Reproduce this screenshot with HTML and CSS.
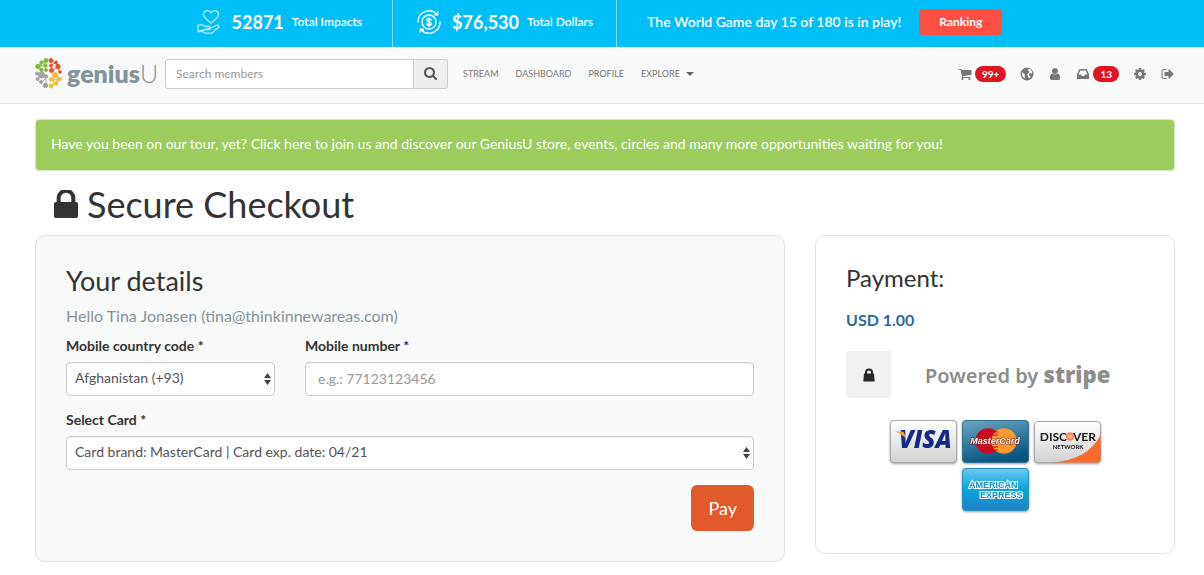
FILE: index.html
```html
<!DOCTYPE html>
<html lang="en">
<head>
<meta charset="utf-8">
<title>Secure Checkout - GeniusU</title>
<link rel="stylesheet" href="styles.css">
</head>
<body>
<div class="impact-bar">
  <div class="stat">
    <svg class="stat-icon" viewBox="0 0 24 26" fill="none" stroke="#b5ecff" stroke-width="1.3" stroke-linejoin="round" stroke-linecap="round"><path d="M14 14C10 11 6.500 8.500 6.500 5.500c0-4.500 6-5 7.500-1.500 1.500-3.500 7.500-3 7.500 1.500 0 3-3.500 5.500-7.500 8.500z"/><path d="M1 17c3-2 5-1.500 7 .5h4c2 0 2 3 0 3H8m5-1 6-3c2.500-1 4 .5 2 2.200L15 24l-6 .3-4-1.800H1zM1 16v7"/></svg>
    <strong class="stat-value">52871</strong><span class="stat-label">Total Impacts</span>
  </div>
  <div class="stat">
    <svg class="stat-icon" viewBox="0 0 24 26" fill="none" stroke="#fff" stroke-width="1.4" stroke-linecap="round"><circle cx="12" cy="13" r="7"/><path d="M1 13A11 11 0 0 1 20 5.300M23 13A11 11 0 0 1 4 20.700M17.500 5.500l3 .5.300-3M6.500 20.500l-3-.5-.3 3"/><path d="M14.300 11c-.4-1.600-4.400-1.700-4.400.2 0 2 4.400 1.300 4.400 3.500 0 2-4.200 2-4.600.1M12 8.500v9"/></svg>
    <strong class="stat-value">$76,530</strong><span class="stat-label">Total Dollars</span>
  </div>
  <div class="game"><span>The World Game day 15 of 180 is in play!</span><button class="ranking" type="button">Ranking</button></div>
</div>
<header class="navbar">
  <a class="brand" href="#" aria-label="geniusU">
    <svg class="brand-mark" viewBox="0 0 27 31">
      <g fill="#83b941" stroke="#83b941"><path d="M3.500 9 7 5l4-3M4 8l6-.5V3M10.500 12V7M6.500 11.500 3 8.500" fill="none"/><circle cx="3" cy="8.500" r="2.300"/><circle cx="6.500" cy="4.500" r="1.700"/><circle cx="11" cy="2.500" r="2"/><circle cx="10.500" cy="7.500" r="1.700"/><circle cx="6.500" cy="12" r="1.700"/><circle cx="11" cy="12" r="1.500"/></g>
      <g fill="#e2542b" stroke="#e2542b"><path d="m16 2 4 3 4 4M20 5l-4 3 1 5 5-4 3 5" fill="none"/><circle cx="16" cy="2.500" r="2"/><circle cx="21" cy="4.500" r="1.500"/><circle cx="16" cy="7.500" r="1.500"/><circle cx="23" cy="8.500" r="2.200"/><circle cx="16.500" cy="12.500" r="2"/><circle cx="25" cy="14" r="1.300"/></g>
      <g fill="#a3a3a3" stroke="#a3a3a3"><path d="m2 15 5 1 4 4v7M7 16l-5 5 4 4 5-5" fill="none"/><circle cx="2" cy="15.500" r="1.500"/><circle cx="6.500" cy="17" r="3"/><circle cx="2.500" cy="21" r="1.500"/><circle cx="11" cy="18.500" r="1.700"/><circle cx="6" cy="24" r="1.500"/><circle cx="10.500" cy="27.500" r="2.200"/></g>
      <g fill="#f2be3e" stroke="#f2be3e"><path d="m20 15 4 6-4 5-4 2m4-12-3 6 7-1m-7 1 3 4" fill="none" stroke-width="1.500"/><circle cx="20" cy="17" r="2.600"/><circle cx="16" cy="21.500" r="1.800"/><circle cx="24.500" cy="21" r="1.800"/><circle cx="21" cy="25.500" r="1.800"/><circle cx="16" cy="28" r="2"/></g>
    </svg>
    <span class="brand-name">genius<span class="brand-u">U</span></span>
  </a>
  <form class="search">
    <input class="search-input" type="text" placeholder="Search members" aria-label="Search members">
    <button class="search-button" type="button" aria-label="Search"><svg class="icon" viewBox="0 0 1792 1792"><path d="M1152 704q0-185-131.500-316.500t-316.500-131.500-316.500 131.500-131.500 316.500 131.500 316.500 316.500 131.500 316.500-131.500 131.500-316.500zm512 832q0 52-38 90t-90 38q-54 0-90-38l-343-342q-179 124-399 124-143 0-273.500-55.500t-225-150-150-225-55.500-273.500 55.500-273.500 150-225 225-150 273.500-55.500 273.500 55.500 225 150 150 225 55.500 273.500q0 220-124 399l343 343q37 37 37 90z"/></svg></button>
  </form>
  <nav class="menu"><a href="#">STREAM</a><a href="#">DASHBOARD</a><a href="#">PROFILE</a><a href="#">EXPLORE<span class="caret"></span></a></nav>
  <div class="tools">
    <a href="#" aria-label="Cart"><svg class="icon" viewBox="0 0 1792 1792"><path d="M704 1536q0 52-38 90t-90 38-90-38-38-90 38-90 90-38 90 38 38 90zm896 0q0 52-38 90t-90 38-90-38-38-90 38-90 90-38 90 38 38 90zm128-1088v512q0 24-16.500 42.500t-40.500 21.500l-1044 122q13 60 13 70 0 16-24 64h920q26 0 45 19t19 45-19 45-45 19h-1024q-26 0-45-19t-19-45q0-11 8-31.500t16-36 21.500-40 15.500-29.500l-177-823h-204q-26 0-45-19t-19-45 19-45 45-19h256q16 0 28.500 6.500t19.500 15.500 13 24.500 8 26 5.500 29.500 4.500 26h1201q26 0 45 19t19 45z"/></svg><span class="badge">99+</span></a>
    <a href="#" aria-label="World"><svg class="icon" viewBox="0 0 14 14"><circle cx="7" cy="7" r="6.500"/><path fill="#f8faf9" d="m8 2.300 1.500-.5 1.800 1.500 1 1.900-.8 1.500-1.200-.6-1.300 1 .2 1.500 1.200.6-.5 1.700-1.200.3-.6-1.900-1-1.200.6-1.400 1.200-1.300.4-.8-.9-.9zM2 5l1.500 1.700 1.500.8-.4 1.400.4 2.400-1.700-.8L1.900 8z"/></svg></a>
    <a href="#" aria-label="Profile"><svg class="icon" viewBox="0 0 1792 1792"><path d="M1536 1399q0 109-62.500 187t-150.500 78h-854q-88 0-150.500-78t-62.500-187q0-85 8.500-160.500t31.500-152 58.500-131 94-89 134.500-34.500q131 128 313 128t313-128q76 0 134.500 34.500t94 89 58.500 131 31.500 152 8.500 160.500zm-256-887q0 159-112.500 271.500t-271.500 112.500-271.500-112.500-112.500-271.500 112.500-271.500 271.500-112.500 271.500 112.500 112.500 271.500z"/></svg></a>
    <a href="#" aria-label="Inbox"><svg class="icon" viewBox="0 0 1792 1792"><path d="M1151 960h316q-1-3-2.500-8t-2.500-8l-212-496h-708l-212 496q-1 2-2.500 8t-2.500 8h316l95 192h320zm513 30v482q0 26-19 45t-45 19h-1408q-26 0-45-19t-19-45v-482q0-62 25-123l238-552q10-25 36.500-42t52.500-17h832q26 0 52.500 17t36.500 42l238 552q25 61 25 123z"/></svg><span class="badge">13</span></a>
    <a href="#" aria-label="Settings"><svg class="icon" viewBox="0 0 1792 1792"><path d="M1152 896q0-106-75-181t-181-75-181 75-75 181 75 181 181 75 181-75 75-181zm512-109v222q0 12-8 23t-20 13l-185 28q-19 54-39 91 35 50 107 138 10 12 10 25t-9 23q-27 37-99 108t-94 71q-12 0-26-9l-138-108q-44 23-91 38-16 136-29 186-7 28-36 28h-222q-14 0-24.500-8.500t-11.500-21.500l-28-184q-49-16-90-37l-141 107q-10 9-25 9-14 0-25-11-126-114-165-168-7-10-7-23 0-12 8-23 15-21 51-66.500t54-70.500q-27-50-41-99l-183-27q-13-2-21-12.500t-8-23.500v-222q0-12 8-23t19-13l186-28q14-46 39-92-40-57-107-138-10-12-10-24 0-10 9-23 26-36 98.500-107.500t94.500-71.500q13 0 26 10l138 107q44-23 91-38 16-136 29-186 7-28 36-28h222q14 0 24.500 8.500t11.500 21.500l28 184q49 16 90 37l142-107q9-9 24-9 13 0 25 10 129 119 165 170 7 8 7 22 0 12-8 23-15 21-51 66.500t-54 70.500q26 50 41 98l183 28q13 2 21 12.500t8 23.500z"/></svg></a>
    <a href="#" aria-label="Sign out"><svg class="icon" viewBox="0 0 1792 1792"><path d="M704 1440q0 4 1 20t.5 26.500-3 23.500-10 19.500-20.500 6.500h-320q-119 0-203.500-84.500t-84.500-203.500v-704q0-119 84.500-203.500t203.500-84.500h320q13 0 22.500 9.500t9.500 22.500q0 4 1 20t.5 26.500-3 23.500-10 19.500-20.500 6.500h-320q-66 0-113 47t-47 113v704q0 66 47 113t113 47h312l11.500 1 11.500 3 8 5.500 7 9 2 13.500zm928-544q0 26-19 45l-544 544q-19 19-45 19t-45-19-19-45v-288h-448q-26 0-45-19t-19-45v-384q0-26 19-45t45-19h448v-288q0-26 19-45t45-19 45 19l544 544q19 19 19 45z"/></svg></a>
  </div>
</header>
<main class="page">
  <a class="alert" href="#">Have you been on our tour, yet? Click here to join us and discover our GeniusU store, events, circles and many more opportunities waiting for you!</a>
  <h1 class="title"><svg class="title-lock" viewBox="320 192 1152 1344"><path d="M640 768h512v-192q0-106-75-181t-181-75-181 75-75 181v192zm832 96v576q0 40-28 68t-68 28h-960q-40 0-68-28t-28-68v-576q0-40 28-68t68-28h32v-192q0-184 132-316t316-132 316 132 132 316v192h32q40 0 68 28t28 68z"/></svg>Secure Checkout</h1>
  <div class="columns">
    <form class="panel details">
      <h2 class="details-title">Your details</h2>
      <p class="hello">Hello Tina Jonasen (tina@thinkinnewareas.com)</p>
      <div class="phone-row">
        <div class="field">
          <label for="country">Mobile country code *</label>
          <div class="select-wrap"><select class="control" id="country"><option>Afghanistan (+93)</option></select><svg class="arrows" viewBox="0 0 7 12"><path d="M0 5 3.500 0 7 5zM0 7h7l-3.500 5z"/></svg></div>
        </div>
        <div class="field">
          <label for="mobile">Mobile number *</label>
          <input class="control" id="mobile" type="tel" placeholder="e.g.: 77123123456">
        </div>
      </div>
      <div class="field">
        <label for="card">Select Card *</label>
        <div class="select-wrap"><select class="control" id="card"><option>Card brand: MasterCard | Card exp. date: 04/21</option></select><svg class="arrows" viewBox="0 0 7 12"><path d="M0 5 3.500 0 7 5zM0 7h7l-3.500 5z"/></svg></div>
      </div>
      <button class="pay" type="button">Pay</button>
    </form>
    <aside class="panel payment">
      <h2 class="payment-title">Payment:</h2>
      <p class="amount">USD 1.00</p>
      <div class="stripe-row">
        <span class="lock-tile"><svg class="small-lock" viewBox="0 0 12 14"><path d="M1 5.500h10l.7 8H.3zM2 6V4.500a4 4 0 0 1 8 0V6H8V4.500a2 2 0 0 0-4 0V6z" fill="#29272c"/></svg></span>
        <span class="powered">Powered by <strong>stripe</strong></span>
      </div>
      <div class="cards">
        <svg class="card" viewBox="0 0 67 43" role="img" aria-label="Visa"><defs><linearGradient id="silver" x2="0" y2="1"><stop stop-color="#fff"/><stop offset="1" stop-color="#d2d2d4"/></linearGradient></defs><rect x=".5" y=".5" width="66" height="42" rx="3.500" fill="url(#silver)" stroke="#aaa"/><text class="visa" x="9" y="28">VISA</text><path d="M5 11.500h7q2 0 2.500 2l1.500 5.500Q12 13.500 5 11.500z" fill="#f4a23c"/></svg>
        <svg class="card" viewBox="0 0 67 43" role="img" aria-label="MasterCard"><defs><linearGradient id="navy" x2=".3" y2="1"><stop stop-color="#6aa6c2"/><stop offset="1" stop-color="#075680"/></linearGradient></defs><rect x=".5" y=".5" width="66" height="42" rx="3.500" fill="url(#navy)" stroke="#37718f"/><circle cx="26" cy="21" r="12.700" fill="#cc0920"/><circle cx="42" cy="21" r="12.700" fill="#fc9a31"/><path d="M31 12h5M30 15h6M30 27h6M31 30h5" stroke="#cc0920"/><text class="mastercard" x="33" y="24">MasterCard</text></svg>
        <svg class="card" viewBox="0 0 67 43" role="img" aria-label="Discover"><rect x=".5" y="1.500" width="66" height="41" rx="3.500" fill="url(#silver)" stroke="#aaa"/><path d="M18 42.500Q54 40 66.500 15v24q0 3.500-3.500 3.500z" fill="#fa6a2b"/><text class="discover" x="33" y="21" text-anchor="end">DISC</text><text class="discover" x="39" y="21">VER</text><circle cx="36" cy="16.500" r="4.200" fill="#f78b55"/><circle cx="36" cy="16.500" r="2" fill="#fbb48d"/><text class="network" x="34" y="29">NETWORK</text></svg>
        <svg class="card" viewBox="0 0 67 43" role="img" aria-label="American Express"><defs><linearGradient id="sky" x2="0" y2="1"><stop stop-color="#6dc9ed"/><stop offset=".5" stop-color="#05a5df"/><stop offset="1" stop-color="#2381c2"/></linearGradient></defs><rect x=".5" y=".5" width="66" height="42" rx="3.500" fill="url(#sky)" stroke="#278fbd"/><text class="amex" x="7" y="20">AMERICAN</text><text class="amex" x="18" y="30">EXPRESS</text></svg>
      </div>
    </aside>
  </div>
</main>
</body>
</html>
```

FILE: styles.css
```css
* { box-sizing: border-box; }
body { margin: 0; background: #fff; color: #333; font-family: Lato, "Open Sans", sans-serif; font-size: 14px; line-height: 20px; }
h1, h2, p { margin: 0; font-weight: 400; }
a { color: inherit; text-decoration: none; }
button, input, select { font: inherit; }
svg { flex: none; display: block; }

.impact-bar { display: flex; justify-content: center; min-height: 47px; background: #00bff8; color: #fff; }
.stat { display: flex; align-items: center; padding: 0 23px 4px 24px; border-right: 1px solid #7edffb; }
.stat:first-child { padding-right: 30px; }
.stat-icon { width: 24px; height: 26px; margin-right: 11px; }
.stat-value { font-size: 18px; font-weight: 700; margin-right: 8px; }
.stat-label { font-size: 12px; font-weight: 600; }
.game { display: flex; align-items: center; gap: 18px; padding: 0 29px 3px 30px; font-size: 14px; font-weight: 600; }
.ranking { width: 83px; height: 26px; padding: 0; border: 0; border-radius: 4px; background: #ff4f43; color: #fff; font-size: 12px; font-weight: 700; }

.navbar { display: flex; align-items: center; min-height: 57px; padding: 0 29px 3px 35px; background: #f8faf9; border-bottom: 1px solid #dfe2e1; }
.brand { display: flex; align-items: center; gap: 5px; width: 130px; }
.brand-mark { width: 27px; height: 31px; }
.brand-name { padding-bottom: 2px; color: #83949a; font-size: 25px; font-weight: 800; line-height: 28px; }
.brand-u { font-weight: 300; }
.search { display: flex; width: 283px; height: 30px; }
.search-input { flex: 1; min-width: 0; padding: 0 10px; border: 1px solid #ccc; border-radius: 3px 0 0 3px; background: #fff; font-size: 12px; }
.search-input::placeholder { color: #999; }
.search-button { display: grid; place-items: center; width: 34px; padding: 0; border: 1px solid #ccc; border-left: 0; border-radius: 0 3px 3px 0; background: #eee; color: #555; }
.icon { width: 14px; height: 14px; fill: currentColor; }
.menu { display: flex; gap: 17px; margin-left: 15px; color: #777; font-size: 9px; }
.menu a { display: flex; align-items: center; }
.caret { margin-left: 6px; border: 4px solid transparent; border-top-color: #666; border-bottom: 0; }
.tools { display: flex; gap: 14px; margin-left: auto; color: #777; }
.tools a { display: flex; align-items: center; gap: 3px; }
.badge { padding: 0 7px; border-radius: 8px; background: #e31422; color: #fff; font-size: 10px; font-weight: 700; line-height: 16px; }

.page { padding: 15px 29px 13px 35px; }
.alert { display: block; padding: 13px 15px 15px; border: 1px solid #d6e9c6; border-radius: 4px; background: #9bcc5c; color: #fff; line-height: 22px; }
.title { display: flex; align-items: center; gap: 9px; padding-left: 19px; margin: 13px 0 11px; font-size: 36px; line-height: 40px; }
.title-lock { width: 24px; height: 28px; fill: #333; }
.columns { display: grid; grid-template-columns: 25fr 12fr; gap: 30px; align-items: start; }
.panel { padding: 29px 30px 30px; border: 1px solid #dfe2e1; border-radius: 10px; }
.details { background: #f8faf9; }
.details-title { font-size: 27px; line-height: 32px; }
.hello { margin: 8px 0 9px; color: #82939a; font-size: 16px; line-height: 22px; }
.phone-row { display: grid; grid-template-columns: 209px 1fr; gap: 30px; margin-bottom: 14px; }
.field label { display: block; margin-bottom: 6px; font-size: 14px; font-weight: 700; line-height: 20px; }
.select-wrap { position: relative; }
.control { display: block; width: 100%; height: 34px; padding: 0 12px 2px; border: 1px solid #ccc; border-radius: 4px; background: #fff; color: #555; box-shadow: inset 0 1px 1px #eee; }
select.control { appearance: none; padding: 0 24px 2px 8px; }
.control::placeholder { color: #999; }
.arrows { position: absolute; right: 4px; top: 11px; width: 7px; height: 12px; fill: #444; pointer-events: none; }
.pay { display: block; height: 46px; margin: 15px 0 0 auto; padding: 0 17px; border: 0; border-radius: 6px; background: #e2592b; color: #fff; font-size: 18px; }

.payment-title { font-size: 24px; line-height: 26px; }
.amount { margin: 18px 0 20px; color: #2a6a9f; font-size: 16px; font-weight: 700; line-height: 22px; }
.stripe-row { display: flex; align-items: center; gap: 34px; }
.lock-tile { display: grid; place-items: center; width: 45px; height: 47px; border-radius: 3px 0 0 3px; background: #f1f1f1; }
.small-lock { width: 12px; height: 14px; }
.powered { color: #8d8d8d; font-family: "Noto Sans", sans-serif; font-size: 20px; font-weight: 600; line-height: 28px; white-space: nowrap; }
.powered strong { font-size: 22px; font-weight: 900; }
.cards { display: flex; flex-wrap: wrap; justify-content: center; gap: 5px; max-width: 220px; margin: 22px auto 12px; }
.card { width: 67px; height: 43px; filter: drop-shadow(0 1px 1px #999); }
.visa { fill: #14288b; font: italic 800 24px "Open Sans", sans-serif; }
.mastercard { fill: #fff; stroke: #7d1a1c; stroke-width: 1px; paint-order: stroke; font: italic 700 9px "Liberation Sans", sans-serif; text-anchor: middle; }
.discover { fill: #151515; font: 700 12px Lato, sans-serif; }
.network { fill: #151515; font: 700 6px Lato, sans-serif; text-anchor: middle; }
.amex { fill: #0d91d0; stroke: #fff; stroke-width: 2px; paint-order: stroke; font: 700 9px "Liberation Sans", sans-serif; }
```
